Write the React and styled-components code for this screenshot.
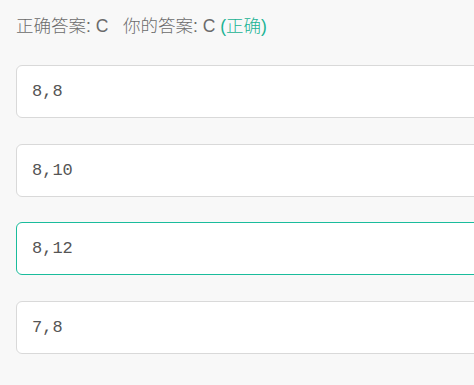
import React from "react";
import styled, { createGlobalStyle } from "styled-components";

const GlobalStyle = createGlobalStyle`
  html, body {
    margin: 0;
    padding: 0;
    background: #f8f8f8;
    overflow: hidden;
  }
`;

const options = [
  { label: "8,8" },
  { label: "8,10" },
  { label: "8,12", selected: true },
  { label: "7,8" },
];

const App = () => {
  return (
    <>
      <GlobalStyle />
      <StyledPage>
        <Result>
          正确答案: C&nbsp;&nbsp;&nbsp;你的答案: C <Correct>(正确)</Correct>
        </Result>
        <OptionList>
          {options.map((o) => (
            <Option key={o.label} $selected={o.selected}>
              {o.label}
            </Option>
          ))}
        </OptionList>
      </StyledPage>
    </>
  );
};

const StyledPage = styled.div`
  width: 520px;
  padding: 14px 0 0 16px;
  font-family: "Liberation Sans", "Noto Sans CJK SC", sans-serif;
`;

const Result = styled.p`
  margin: 0;
  height: 24px;
  line-height: 24px;
  font-size: 17.5px;
  font-weight: 300;
  color: #6b6b6b;
  white-space: nowrap;
`;

const Correct = styled.span`
  color: #1ab394;
`;

const OptionList = styled.div`
  margin-top: 27px;
  display: flex;
  flex-direction: column;
  gap: 25.5px;
`;

const Option = styled.div`
  box-sizing: border-box;
  height: 53px;
  display: flex;
  align-items: center;
  padding: 0 15px;
  background: #fff;
  border: 1px solid ${(p) => (p.$selected ? "#1abc9c" : "#d9d9d9")};
  border-radius: 6px;
  font-family: "Liberation Mono", monospace;
  font-size: 17px;
  color: #555;
`;

export default App;
